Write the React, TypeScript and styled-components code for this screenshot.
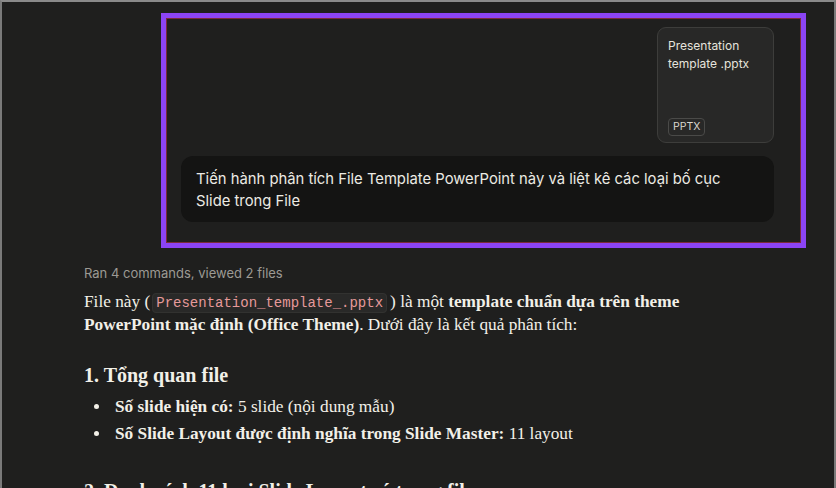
import React from "react";
import styled, { createGlobalStyle } from "styled-components";

const Global = createGlobalStyle`
  html, body { margin: 0; padding: 0; background: #1f1f1e; }
  * { box-sizing: border-box; }
`;

const Frame = styled.div`
  width: 836px;
  height: 488px;
  overflow: hidden;
  background: #1f1f1e;
  border-top: 2px solid #8a8a8a;
  border-left: 2px solid #7a7a7a;
  border-right: 2px solid #7a7a7a;
`;

const Column = styled.div`
  margin-left: 82px;
  width: 690px;
  padding-top: 11px;
  display: flex;
  flex-direction: column;
`;

const Highlight = styled.div`
  margin-left: 77px;
  margin-right: -32px;
  border: 5px solid #8b44f4;
  box-shadow: inset 0 0 0 1px #7a2a3a;
  padding: 9px 27px 21px 15px;
  display: flex;
  flex-direction: column;
  align-items: flex-end;
  gap: 13px;
`;

const FileCard = styled.div`
  width: 117px;
  height: 116px;
  background: #282827;
  border: 1px solid #3d3d3b;
  border-radius: 9px;
  padding: 9px 10px 6px 10px;
  display: flex;
  flex-direction: column;
  justify-content: space-between;
  align-items: flex-start;
`;

const FileName = styled.div`
  font-family: Inter, "Noto Sans", sans-serif;
  font-size: 12px;
  line-height: 18px;
  color: #e6e4dd;
`;

const Badge = styled.span`
  font-family: Inter, "Noto Sans", sans-serif;
  font-size: 10.5px;
  line-height: 14px;
  color: #d8d6cf;
  border: 1px solid #4a4a48;
  border-radius: 4px;
  padding: 1px 4px;
`;

const Bubble = styled.div`
  width: 593px;
  background: #141413;
  border-radius: 12px;
  padding: 12px 40px 10px 15px;
  font-family: Inter, "Noto Sans", sans-serif;
  font-size: 14.8px;
  line-height: 22px;
  color: #ecebe4;
`;

const Meta = styled.div`
  margin-top: 16px;
  font-family: Inter, "Noto Sans", sans-serif;
  font-size: 13px;
  line-height: 18px;
  color: #9c9a94;
`;

const Prose = styled.div`
  margin-top: 9px;
  max-width: 660px;
  font-family: "Liberation Serif", "DejaVu Serif", serif;
  color: #f2f0e8;
`;

const Para = styled.p`
  margin: 0;
  font-size: 17.3px;
  line-height: 22px;
`;

const Code = styled.code`
  font-family: "Liberation Mono", monospace;
  font-size: 14px;
  color: #e69a9a;
  background: #292928;
  border: 1px solid #323230;
  border-radius: 4px;
  padding: 1px 3px;
  margin: 0 3px 0 2px;
`;

const H3 = styled.h3<{ $gap?: number }>`
  margin: ${(p) => p.$gap ?? 25}px 0 4px 0;
  font-size: 20px;
  line-height: 28px;
  font-weight: 700;
`;

const List = styled.ul`
  margin: 0;
  padding: 0 0 0 10px;
  list-style: none;
`;

const Item = styled.li`
  display: flex;
  align-items: center;
  gap: 16px;
  font-size: 17.3px;
  line-height: 27px;
`;

const Dot = styled.span`
  flex: none;
  width: 5px;
  height: 5px;
  border-radius: 50%;
  background: #f2f0e8;
`;

export default function App() {
  return (
    <>
      <Global />
      <Frame>
        <Column>
          <Highlight>
            <FileCard>
              <FileName>
                Presentation
                <br />
                template .pptx
              </FileName>
              <Badge>PPTX</Badge>
            </FileCard>
            <Bubble>
              Tiến hành phân tích File Template PowerPoint này và liệt kê các loại bố cục Slide trong File
            </Bubble>
          </Highlight>
          <Meta>Ran 4 commands, viewed 2 files</Meta>
          <Prose>
            <Para>
              File này (<Code>Presentation_template_.pptx</Code>) là một{" "}
              <b>template chuẩn dựa trên theme PowerPoint mặc định (Office Theme)</b>. Dưới đây là kết quả phân tích:
            </Para>
            <H3>1. Tổng quan file</H3>
            <List>
              <Item>
                <Dot />
                <span>
                  <b>Số slide hiện có:</b> 5 slide (nội dung mẫu)
                </span>
              </Item>
              <Item>
                <Dot />
                <span>
                  <b>Số Slide Layout được định nghĩa trong Slide Master:</b> 11 layout
                </span>
              </Item>
            </List>
            <H3 $gap={30}>2. Danh sách 11 loại Slide Layout có trong file</H3>
          </Prose>
        </Column>
      </Frame>
    </>
  );
}
